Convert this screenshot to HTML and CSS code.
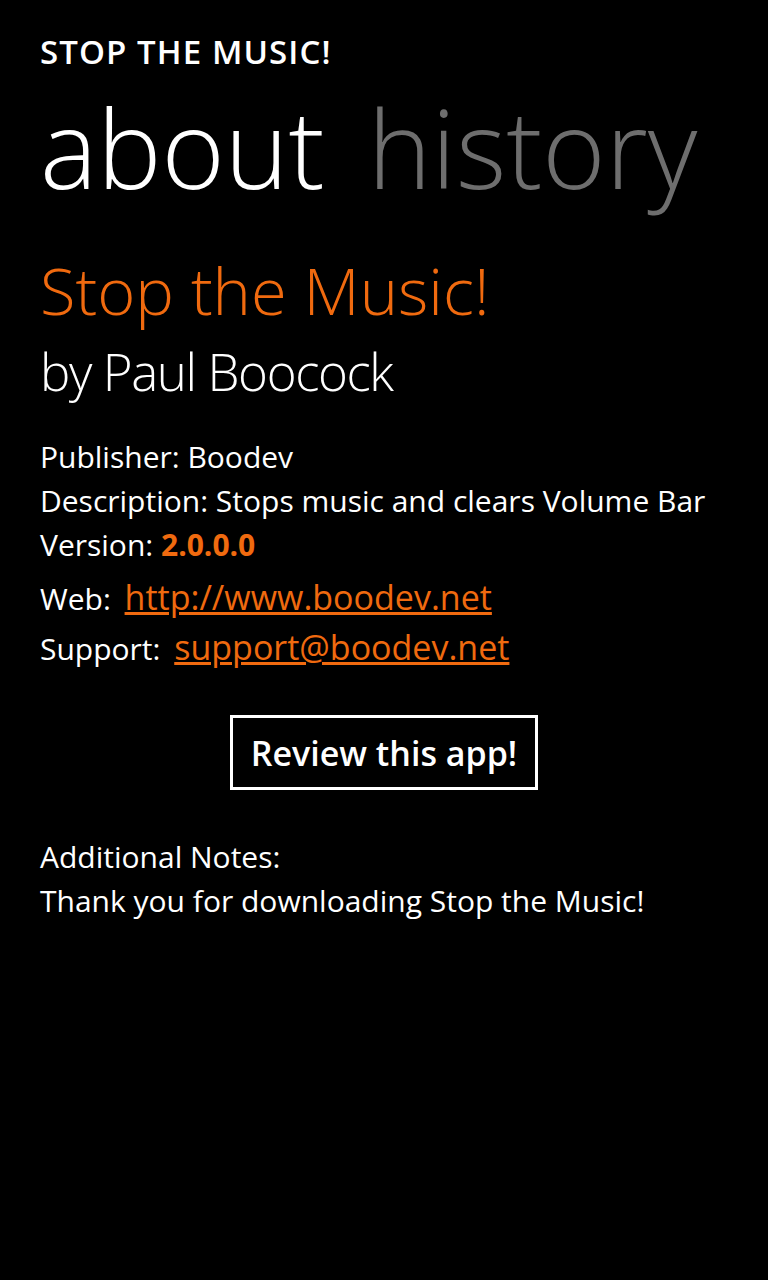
FILE: index.html
```html
<!DOCTYPE html>
<html lang="en">
<head>
    <meta charset="UTF-8">
    <title>Stop the Music! - about</title>
    <meta name="viewport" content="width=device-width, initial-scale=1.0">
    <link rel="stylesheet" href="styles.css">
</head>
<body>
<header class="app-header">
    <h1 class="app-title">STOP THE MUSIC!</h1>
    <nav class="pivot">
        <span class="pivot-item active">about</span>
        <span class="pivot-item">history</span>
    </nav>
</header>

<main class="about">
    <h2 class="app-name">Stop the Music!</h2>
    <p class="author">by Paul Boocock</p>

    <div class="details">
        <p>Publisher: Boodev</p>
        <p>Description: Stops music and clears Volume Bar</p>
        <p>Version: <strong class="accent">2.0.0.0</strong></p>
    </div>

    <div class="links">
        <p>Web: <a href="#">http://www.boodev.net</a></p>
        <p>Support: <a href="#">support@boodev.net</a></p>
    </div>

    <div class="review">
        <button class="review-btn">Review this app!</button>
    </div>

    <div class="notes">
        <p>Additional Notes:</p>
        <p>Thank you for downloading Stop the Music!</p>
    </div>
</main>
</body>
</html>
```

FILE: styles.css
```css
* {
    box-sizing: border-box;
}

html, body {
    background-color: #000;
}

body {
    margin: 0;
    padding: 32px 0 0 40px;
    color: #fff;
    font-family: "Open Sans", "Noto Sans", sans-serif;
    min-height: 1280px;
}

p, h1, h2 {
    margin: 0;
    font-weight: normal;
}

.app-title {
    font-size: 33px;
    line-height: 40px;
    font-weight: 600;
    letter-spacing: 1.1px;
}

.pivot {
    margin-top: 16px;
    display: flex;
    gap: 43px;
    white-space: nowrap;
}

.pivot-item {
    font-size: 108px;
    line-height: 120px;
    font-weight: 300;
    color: #6e6e6e;
}

.pivot-item.active {
    color: #fff;
}

.app-name {
    margin-top: 44px;
    font-size: 65px;
    line-height: 76px;
    font-weight: 300;
    color: #f06a0f;
}

.author {
    margin-top: 13px;
    font-size: 51px;
    line-height: 60px;
    font-weight: 300;
    letter-spacing: -1.4px;
}

.details {
    margin-top: 34px;
    font-size: 30px;
    line-height: 44px;
}

.accent {
    color: #f06a0f;
    font-weight: 700;
}

.links {
    margin-top: 6px;
    font-size: 30px;
    line-height: 48px;
}

.links a {
    color: #f06a0f;
    font-size: 34px;
    margin-left: 6px;
}

.review {
    display: flex;
    justify-content: center;
    margin: 42px 0 0 -40px;
}

.review-btn {
    width: 308px;
    height: 75px;
    background: #000;
    color: #fff;
    border: 3px solid #fff;
    font-family: inherit;
    font-size: 34px;
    font-weight: 600;
}

.notes {
    margin-top: 45px;
    font-size: 30px;
    line-height: 44px;
}
```
